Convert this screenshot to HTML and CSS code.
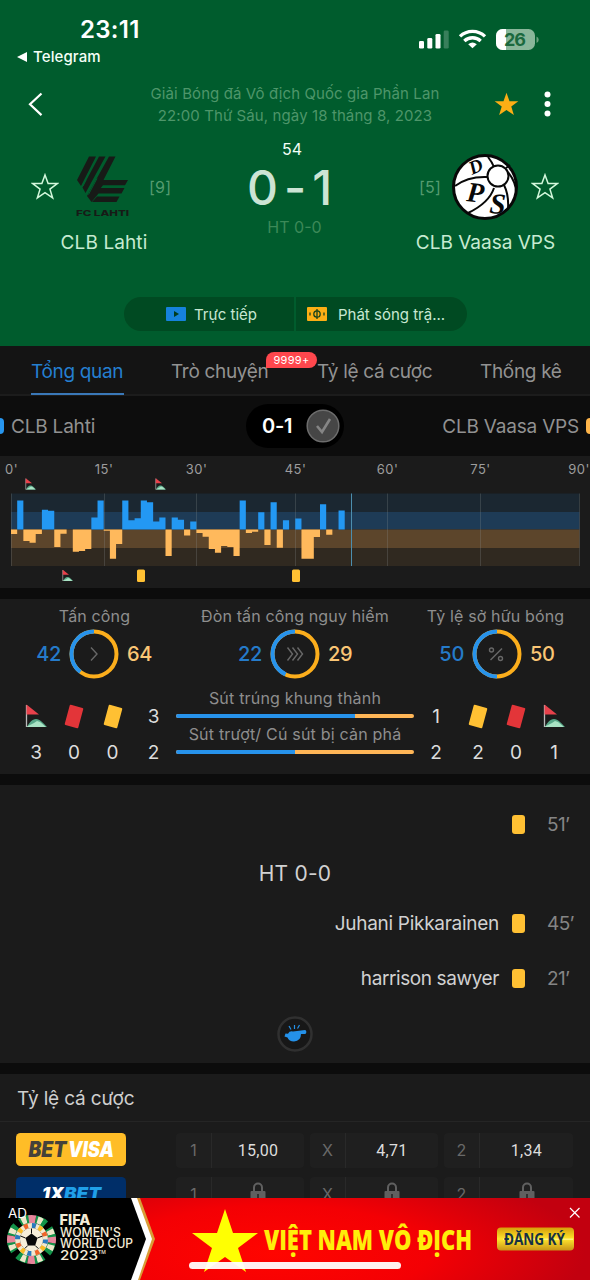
FILE: index.html
```html
<!DOCTYPE html>
<html lang="vi">
<head>
<meta charset="utf-8">
<title>CLB Lahti - CLB Vaasa VPS</title>
<link rel="stylesheet" href="styles.css">
</head>
<body>
<svg class="defs" width="0" height="0">
  <symbol id="star" viewBox="0 0 26 26"><path d="M13 1.800l2.900 8h8.500l-6.800 5.200 2.500 8.200L13 18.300l-7.100 4.900L8.400 15 1.600 9.800h8.500z"/></symbol>
  <symbol id="corner" viewBox="0 0 22 24"><path d="M2 23c2-4 5-8 9-8s7 4 11 8z" fill="#58a889"/><path d="M1 23l8-4 3-2 3 1 6 5z" fill="#a9e3c4"/><path d="M1.500 1v22" stroke="#bbb" stroke-width="1.300"/><path d="M1.500.5L14 10.500H1.500z" fill="#e8414b"/></symbol>
  <symbol id="lock" viewBox="0 0 16 20"><path d="M4 9V5.500a4 4 0 018 0V9" fill="none" stroke="#606060" stroke-width="2"/><path d="M1.500 9h13a1 1 0 011 1v9H.5v-9a1 1 0 011-1z" fill="#606060"/><path d="M8 12v4" stroke="#222" stroke-width="1.500"/></symbol>
</svg>
<main class="screen">
  <header class="hero">
    <div class="status">
      <div class="status-left">
        <div class="clock">23:11</div>
        <div class="back-app"><span class="back-arrow"></span>Telegram</div>
      </div>
      <svg class="status-icons" width="120" height="24" viewBox="0 0 120 24">
        <g fill="#fff"><rect x="0" y="13" width="5" height="7.500" rx="1.300"/><rect x="8.300" y="10" width="5" height="10.500" rx="1.300"/><rect x="16.500" y="6" width="5" height="14.500" rx="1.300"/><rect x="24.700" y="2.500" width="5" height="18" rx="1.300" opacity=".22"/></g>
        <g fill="none" stroke="#fff" stroke-width="3.300"><path d="M41 8.400a18 18 0 0125 0"/><path d="M45.300 13a12 12 0 0116.400 0"/></g><path d="M49.200 16.300q4.300-3.700 8.600 0l-4.300 4z" fill="#fff"/>
        <rect x="77" y="1" width="39" height="21" rx="6.500" fill="#89b69a"/><path d="M83.500 1H87v21h-3.500a6.500 6.500 0 01-6.500-6.500v-8A6.500 6.500 0 0183.500 1z" fill="#fff"/><path d="M117.500 8.500q2.200 1 2.200 3.300t-2.200 3.300z" fill="#6ba17e"/>
        <text x="85" y="18" class="battery" textLength="22">26</text>
      </svg>
    </div>
    <div class="topbar">
      <svg width="20" height="28" viewBox="0 0 20 28"><path d="M14.500 2.500L3 13.300l11.500 10.800" fill="none" stroke="#fff" stroke-width="2.200"/></svg>
      <div class="league"><p>Giải Bóng đá Vô địch Quốc gia Phần Lan</p><p>22:00 Thứ Sáu, ngày 18 tháng 8, 2023</p></div>
      <svg class="fav" width="27" height="27"><use href="#star" fill="#fcae15"/></svg>
      <svg class="dots" width="8" height="28" fill="#fff"><circle cx="4.500" cy="3.500" r="3"/><circle cx="4.500" cy="13" r="3"/><circle cx="4.500" cy="22.500" r="3"/></svg>
    </div>
    <div class="match">
      <div class="team home">
        <div class="team-row">
          <svg class="outline" width="28" height="28"><use href="#star"/></svg>
          <svg width="56" height="64" viewBox="0 0 56 64"><g fill="#171a17"><path d="M13 1.500h7L5 31l-4-6zM23 1.500h6.500L9.500 38l-3-5.500zM33 1.500h6.500L27.500 25H52l-3 5.200H27L24.800 33H48.500L45.500 38.500H22.500L15.500 47 11 41z"/><path d="M21 41.500h22.500l-3 5.500H16z"/></g><path d="M21 23.500L12.500 39.500M10 25l-3 6" stroke="#005c2d" stroke-width="1"/><text x="0" y="60.500" class="lahti" textLength="53" lengthAdjust="spacingAndGlyphs">FC LAHTI</text></svg>
          <span class="rank">[9]</span>
        </div>
        <div class="team-name">CLB Lahti</div>
      </div>
      <div class="score"><div class="minute">54</div><div class="result">0<span class="dash">-</span>1</div><div class="half">HT 0-0</div></div>
      <div class="team away">
        <div class="team-row">
          <span class="rank">[5]</span>
          <svg width="66" height="66" viewBox="0 0 66 66"><circle cx="33" cy="33" r="31.500" fill="#fff" stroke="#080808" stroke-width="3"/><g fill="none" stroke="#080808" stroke-width="2"><path d="M3 32Q16 22 36 23M36 3q4 5 6 10M42 34Q37 49 16 59M52 31q5 10 4 24M56 18q8 10 8 20M54 14l4-3"/><circle cx="46" cy="22" r="10.500" fill="#fff"/></g><g class="crest"><text transform="translate(20 21) rotate(-24)" font-size="19">D</text><text transform="translate(14 47) rotate(6)" font-size="28">P</text><text transform="translate(37 59) rotate(4)" font-size="29">S</text></g></svg>
          <svg class="outline" width="28" height="28"><use href="#star"/></svg>
        </div>
        <div class="team-name">CLB Vaasa VPS</div>
      </div>
    </div>
    <div class="watch">
      <div class="watch-btn live"><svg width="20" height="14"><rect width="20" height="14" rx="1" fill="#1682dc"/><path d="M8 4l5 3-5 3z" fill="#003c20"/></svg><span>Trực tiếp</span></div>
      <div class="watch-btn anim"><svg width="20" height="14"><rect width="20" height="14" rx="1" fill="#fcae15"/><g fill="none" stroke="#17431c" stroke-width="1.300"><circle cx="10" cy="7" r="3.200"/><path d="M10 2v10M3 5.500v3M17 5.500v3"/></g></svg><span>Phát sóng trậ...</span></div>
    </div>
  </header>

  <nav class="tabs">
    <span class="tab active">Tổng quan</span><span class="tab chat">Trò chuyện<b class="badge">9999+</b></span><span class="tab odds-tab">Tỷ lệ cá cược</span><span class="tab">Thống kê</span>
  </nav>
  <section class="versus">
    <span class="chip blue"></span><span class="v-name">CLB Lahti</span>
    <div class="pill"><b>0-1</b><svg width="34" height="34"><circle cx="17" cy="17" r="15.800" fill="#464646" stroke="#6d6d6d" stroke-width="1.500"/><path d="M11 17l5 6 8-13" fill="none" stroke="#858585" stroke-width="2.600"/></svg></div>
    <span class="v-name right">CLB Vaasa VPS</span><span class="chip orange"></span>
  </section>

  <section class="chart">
    <svg width="590" height="132" viewBox="0 0 590 132">
      <g class="axis"><text x="11.500" y="17.500">0'</text><text x="104" y="17.500">15'</text><text x="196.500" y="17.500">30'</text><text x="295.500" y="17.500">45'</text><text x="387.500" y="17.500">60'</text><text x="480.500" y="17.500">75'</text><text x="579" y="17.500">90'</text></g>
      <rect x="11" y="37.500" width="568.500" height="18.500" fill="#1b2731"/><rect x="11" y="56" width="568.500" height="17.500" fill="#1e3b56"/><rect x="11" y="73.500" width="568.500" height="18.500" fill="#5c452b"/><rect x="11" y="92" width="568.500" height="18" fill="#302920"/>
      <path d="M11.500 37.500V110M104.500 37.500V110M196.500 37.500V110M295.500 37.500V110M387.500 37.500V110M480.500 37.500V110M579.500 37.500V110" stroke="#8a9295" stroke-opacity=".25"/>
      <g transform="translate(11 73.500) scale(6.180 1)"><path fill="#2398f3" d="M1 0v-29h1V0zM5 0v-19.700h1v1h1V0zM13 0v-12h1v-17h1V0zM18 0v-29h1v19.700h1v-2h1V-29h1v1.700h1V-8h1v-4h1V0zM26 0v-12h1v2.300h1V0zM29 0v-8h1v8zM37 0v-29h1V0zM40 0v-17.300h1V0zM42 0v-27.300h1V0zM44 0v-9.300h1V0zM46 0v-11h1V0zM50 0v-25.300h1V0zM53 0v-19h1V0z"/><path fill="#ffb95c" d="M0 0v4.500h1V0zM2 0v11.500h1v1.800h1V4.500h1V0zM7 0v17.500h1V4.200h1V0zM10 0v22.200h1v-.7h1v-2h1V0zM15 0v1.200h1v28h1V14.500h1V0zM25 0v26.500h1V0zM28 0v6h1V0zM30 0v3.500h1v3.700h1v12.300h1v3.700h1v-6.700h1v1h1v9h1V0zM38 0v3.500h1V2.200h1V0zM41 0v15.500h1V0zM43 0v18.200h1V0zM47 0v29.200h2V7.500h1V0zM51 0v5.200h1V0z"/></g>
      <path d="M351.500 37.500V110" stroke="#4c8eae"/>
      <use href="#corner" x="24.500" y="22" width="12" height="12"/><use href="#corner" x="154.500" y="22" width="12" height="12"/><use href="#corner" x="61.500" y="113.500" width="12" height="12"/>
      <g fill="#ffc033"><rect x="137" y="113.500" width="8" height="12.500" rx="1.500"/><rect x="292" y="113.500" width="8" height="12.500" rx="1.500"/></g>
    </svg>
  </section>

  <section class="stats">
    <div class="rings">
      <div class="ring-stat"><h3>Tấn công</h3><div class="ring-row"><b class="blue-t">42</b><svg width="50" height="50" viewBox="0 0 50 50"><circle class="ring away-ring" cx="25" cy="25" r="22.500"/><circle class="ring home-ring" cx="25" cy="25" r="22.500" pathLength="100" stroke-dasharray="39.600 100" transform="matrix(0 -1 -1 0 50 50)"/><path class="glyph" d="M22 18.500l6 6.500-6 6.500"/></svg><b class="gold-t">64</b></div></div>
      <div class="ring-stat"><h3>Đòn tấn công nguy hiểm</h3><div class="ring-row"><b class="blue-t">22</b><svg width="50" height="50" viewBox="0 0 50 50"><circle class="ring away-ring" cx="25" cy="25" r="22.500"/><circle class="ring home-ring" cx="25" cy="25" r="22.500" pathLength="100" stroke-dasharray="43.100 100" transform="matrix(0 -1 -1 0 50 50)"/><path class="glyph" d="M17.500 18.500l5 6.500-5 6.500M22.500 18.500l5 6.500-5 6.500M27.500 18.500l5 6.500-5 6.500"/></svg><b class="gold-t">29</b></div></div>
      <div class="ring-stat"><h3>Tỷ lệ sở hữu bóng</h3><div class="ring-row"><b class="blue-t">50</b><svg width="50" height="50" viewBox="0 0 50 50"><circle class="ring away-ring" cx="25" cy="25" r="22.500"/><circle class="ring home-ring" cx="25" cy="25" r="22.500" pathLength="100" stroke-dasharray="50 100" transform="matrix(0 -1 -1 0 50 50)"/><path class="glyph" d="M30 19.500L18.500 31"/><circle class="glyph" cx="19.500" cy="21" r="2"/><circle class="glyph" cx="28.500" cy="29.500" r="2"/></svg><b class="gold-t">50</b></div></div>
    </div>
    <div class="counts">
      <div class="cards home-cards"><svg width="22" height="24"><use href="#corner"/></svg><i class="card red"></i><i class="card yellow"></i><span>3</span><span>3</span><span>0</span><span>0</span><span>2</span></div>
      <div class="bars"><h3>Sút trúng khung thành</h3><div class="bar"><i style="width:75%"></i></div><h3>Sút trượt/ Cú sút bị cản phá</h3><div class="bar"><i style="width:50%"></i></div></div>
      <div class="cards away-cards"><span>1</span><i class="card yellow"></i><i class="card red"></i><svg width="22" height="24"><use href="#corner"/></svg><span>2</span><span>2</span><span>0</span><span>1</span></div>
    </div>
  </section>

  <section class="events">
    <div class="event first"><i class="mini"></i><time>51’</time></div>
    <div class="ht">HT 0-0</div>
    <div class="event juhani"><span>Juhani Pikkarainen</span><i class="mini"></i><time>45’</time></div>
    <div class="event harrison"><span>harrison sawyer</span><i class="mini"></i><time>21’</time></div>
    <svg class="whistle" width="36" height="36" viewBox="0 0 36 36"><circle cx="18" cy="18" r="16.500" fill="#171717" stroke="#303030" stroke-width="2.500"/><path d="M16 15.500l12-1.500c1.800 0 1.800 4 0 4h-4q0 7-7 7.500-5 0-6.500-4l-3-1 1-3 2.500.2q1.500-3 5-2.200z" fill="#2491e9"/><path d="M14 13.500l-2-3.500M17.500 13V9M20.500 12.500l2-3.500" stroke="#2491e9" stroke-width="1.200"/></svg>
  </section>

  <section class="odds">
    <h2>Tỷ lệ cá cược</h2>
    <div class="odds-row">
      <svg class="brand" width="110" height="33"><rect width="110" height="33" rx="4.500" fill="#ffbd27"/><text class="brand-text" x="12.500" y="24" fill="#45413a" textLength="38" lengthAdjust="spacingAndGlyphs">BET</text><text class="brand-text" x="52" y="24" fill="#fff" textLength="46" lengthAdjust="spacingAndGlyphs">VISA</text></svg>
      <div class="odd"><span>1</span><b>15,00</b></div><div class="odd"><span>X</span><b>4,71</b></div><div class="odd"><span>2</span><b>1,34</b></div>
    </div>
    <div class="odds-row">
      <svg class="brand" width="110" height="33"><rect width="110" height="33" rx="4.500" fill="#002e68"/><text class="brand-text small" x="26" y="23" fill="#fff" textLength="22" lengthAdjust="spacingAndGlyphs">1X</text><text class="brand-text small" x="48" y="23" fill="#20a0e8" textLength="37" lengthAdjust="spacingAndGlyphs">BET</text></svg>
      <div class="odd"><span>1</span><b><svg width="16" height="20"><use href="#lock"/></svg></b></div><div class="odd"><span>X</span><b><svg width="16" height="20"><use href="#lock"/></svg></b></div><div class="odd"><span>2</span><b><svg width="16" height="20"><use href="#lock"/></svg></b></div>
    </div>
  </section>

  <footer class="ad">
    <svg width="590" height="82" viewBox="0 0 590 82">
      <defs><radialGradient id="red" gradientUnits="userSpaceOnUse" cx="0" cy="0" r="1" gradientTransform="translate(275 55) scale(310 95)"><stop offset="0" stop-color="#ff0500"/><stop offset=".5" stop-color="#f40004"/><stop offset="1" stop-color="#c2000f"/></radialGradient><linearGradient id="gold" x2="0" y2="1"><stop offset="0" stop-color="#d69d09"/><stop offset=".5" stop-color="#ffe52d"/><stop offset="1" stop-color="#c89416"/></linearGradient></defs>
      <rect width="590" height="82" fill="url(#red)"/>
      <path d="M0 0h140l15 41-15 41H0z" fill="#d99c36"/><path d="M0 0h137l15 41-14 41H0z" fill="#fff"/><path d="M0 0h131l15 41-15 41H0z" fill="#000"/>
      <g transform="translate(31.500 41.500)" fill="none">
        <circle r="20.500" stroke="#129349" stroke-width="8" stroke-dasharray="9 7.100" stroke-dashoffset="-3.500"/><circle r="20.500" stroke="#eee5c9" stroke-width="7" stroke-dasharray="5 11.100" stroke-dashoffset="-5.500"/><circle r="20.500" stroke="#129349" stroke-width="8" stroke-dasharray="4 12.100" stroke-dashoffset="-10.500"/><circle r="20.500" stroke="#e7859b" stroke-width="8" stroke-dasharray="7 25.200" stroke-dashoffset="3.500"/>
        <circle r="14" stroke="#f2e8ce" stroke-width="5"/><circle r="14" stroke="#2878bd" stroke-width="5" stroke-dasharray="4 17.990"/><circle r="14" stroke="#f8bb25" stroke-width="5" stroke-dasharray="4 17.990" stroke-dashoffset="-7"/><circle r="14" stroke="#ef6528" stroke-width="5" stroke-dasharray="4 17.990" stroke-dashoffset="-14"/>
        <circle r="11.500" fill="#f7efda"/><path d="M0-6l6 4.500L3.700 6h-7.400L-6-1.500z" fill="#080808"/><path d="M0-6v-5M6-1.500l5-2M3.700 6l3 3M-3.700 6l-3 3M-6-1.500l-5-2" stroke="#080808" stroke-width="1"/>
      </g>
      <text x="8" y="20" fill="#fff" font-size="13.500" textLength="19">AD</text>
      <g fill="#f4ecd7" class="fifa"><text x="59.500" y="27" class="fifa-bold" textLength="31" lengthAdjust="spacingAndGlyphs">FIFA</text><text x="60" y="38.500" textLength="61" lengthAdjust="spacingAndGlyphs">WOMEN'S</text><text x="60" y="50" textLength="73" lengthAdjust="spacingAndGlyphs">WORLD CUP</text><text x="60" y="61.500" textLength="38" lengthAdjust="spacingAndGlyphs">2023</text><text x="98" y="56" class="tm">TM</text></g>
      <path d="M225 11l8 24h25l-20 15 8 24-21-15-21 15 8-24-20-15h25z" fill="#ffff02"/>
      <text class="headline" x="264" y="52" textLength="208" lengthAdjust="spacingAndGlyphs">VIỆT NAM VÔ ĐỊCH</text>
      <rect x="497" y="29.500" width="77" height="23" rx="4" fill="url(#gold)"/><rect x="503" y="40.500" width="70" height="1.500" fill="#fff47b"/><text class="register" x="504" y="47" textLength="61" lengthAdjust="spacingAndGlyphs">ĐĂNG KÝ</text>
      <path d="M570 10l9.500 9.500M579.500 10L570 19.500" stroke="#fff" stroke-width="1.200"/>
      <rect x="189" y="64" width="212" height="7" rx="3.500" fill="#fff" fill-opacity=".94"/>
    </svg>
  </footer>
</main>
</body>
</html>
```
FILE: styles.css
```css
* { box-sizing: border-box; }
body { margin: 0; background: #0c0c0c; font-family: Inter, "Noto Sans", sans-serif; color: #ddd; }
h2, h3, p { margin: 0; font-weight: 400; }
b { font-weight: 400; }
svg { display: block; flex-shrink: 0; }
.defs { position: absolute; }
.screen { width: 590px; height: 1280px; overflow: hidden; display: flex; flex-direction: column; }
.hero { height: 346px; background: #005c2d; flex-shrink: 0; }
.status { display: flex; justify-content: space-between; height: 80px; padding: 16px 51px 0 17px; }
.status-left { width: 160px; }
.clock { margin-left: 63px; font-size: 24px; line-height: 28px; font-weight: 600; color: #fff; letter-spacing: .3px; }
.back-app { display: flex; align-items: center; gap: 6px; margin-top: 3px; font-size: 15px; line-height: 20px; font-weight: 500; color: #f5fff7; letter-spacing: .1px; }
.back-arrow { border: 5px solid transparent; border-right: 10px solid #fff; border-left: 0; }
.status-icons { margin-top: 12px; }
.battery { font-size: 18px; font-weight: 700; fill: #1b693e; }
.topbar { display: grid; grid-template-columns: 20px 446px 27px 27px; align-items: center; padding: 2px 0 0 27px; height: 48px; }
.league { padding-left: 56px; text-align: center; padding-right: 6px; font-size: 15px; line-height: 22px; color: #4e966a; white-space: nowrap; letter-spacing: .1px; }
.fav { margin-bottom: 2px; }
.dots { margin-left: 23px; }
.match { display: grid; grid-template-columns: 208px 168px 214px; height: 148px; padding-top: 10px; }
.team-row { display: flex; align-items: center; height: 74px; padding-top: 4px; margin-top: 10px; }
.home .team-row { padding-left: 31px; gap: 17px; }
.away .team-row { padding-left: 43px; gap: 11px; }
.away .outline { margin-left: 2px; }
.outline { fill: none; stroke: #d3f8dc; stroke-width: 1.4px; }
.rank { font-size: 16px; letter-spacing: .2px; color: #559b70; }
.team-name { font-size: 19px; line-height: 24px; margin-top: 9px; color: #c6ebd2; text-align: center; letter-spacing: .1px; }
.away .team-name { padding-left: 5px; letter-spacing: 0; }
.lahti { font-size: 8px; font-weight: 800; fill: #171a17; }
.crest { font-family: "Liberation Serif", serif; font-weight: bold; font-style: italic; fill: #080808; }
.score { text-align: center; }
.minute { color: #f3fff7; font-size: 16px; line-height: 22px; }
.result { display: flex; justify-content: center; font-size: 48px; line-height: 56px; font-weight: 500; color: #cce4d4; padding-right: 5px; }
.dash { padding: 0 6px; }
.half { font-size: 16px; line-height: 22px; color: #3c8958; padding-left: 5px; }
.watch { display: flex; gap: 2px; margin: 21px 0 0 124px; width: 343px; height: 34px; }
.watch-btn { display: flex; align-items: center; background: #004a22; color: #c8e8d2; font-size: 15px; white-space: nowrap; }
.live { width: 170px; padding-left: 42px; border-radius: 17px 0 0 17px; gap: 8px; }
.anim { width: 171px; padding-left: 11px; border-radius: 0 17px 17px 0; gap: 11px; }
.tabs { display: flex; height: 50px; padding-left: 31px; background: #141414; border-bottom: 2px solid #1c1c1c; flex-shrink: 0; color: #929292; font-size: 19px; line-height: 51px; white-space: nowrap; letter-spacing: -.32px; }
.tab { height: 49px; }
.active { color: #257fd0; border-bottom: 2px solid #3a78b8; margin-right: 47px; width: 93px; }
.chat { position: relative; width: 99px; margin-right: 47px; }
.odds-tab { width: 116px; margin-right: 47px; }
.badge { position: absolute; left: 95px; top: 6px; width: 51px; height: 16px; border-radius: 8px 8px 8px 0; background: #ff474d; color: #fff; font-size: 11px; line-height: 16px; text-align: center; letter-spacing: .3px; }
.versus { display: grid; grid-template-columns: 4px 242px 98px 235px 11px; align-items: center; height: 60px; background: #0d0d0d; flex-shrink: 0; }
.chip { height: 16px; }
.blue { background: #2796ef; border-radius: 0 4px 4px 0; }
.orange { background: #ffb54a; border-radius: 4px 0 0 4px; margin-left: 7px; }
.v-name { color: #919191; font-size: 19px; padding-left: 7px; letter-spacing: -.2px; }
.right { text-align: right; padding: 0; }
.pill { display: flex; align-items: center; justify-content: space-between; height: 44px; border-radius: 22px; padding: 0 4px 0 16px; background: #000; color: #fff; font-size: 20px; }
.pill b { font-weight: 600; letter-spacing: -.3px; }
.chart { height: 132px; background: #1b1b1b; flex-shrink: 0; }
.axis { font-size: 13px; fill: #9d9d9d; text-anchor: middle; letter-spacing: .5px; }
.stats { margin-top: 11px; height: 175px; background: #1b1b1b; flex-shrink: 0; padding-top: 6px; }
.rings { display: grid; grid-template-columns: 189px 212px 189px; }
.stats h3 { text-align: center; color: #8e8e8e; font-size: 16px; line-height: 22px; white-space: nowrap; letter-spacing: .15px; }
.ring-row { display: flex; justify-content: center; align-items: center; gap: 8px; font-size: 20px; margin-top: 2px; letter-spacing: -.3px; }
.ring-row b { font-weight: 500; width: 26px; }
.ring-row .blue-t { text-align: right; }
.ring-row .gold-t { text-align: left; }
.ring-stat:first-child .ring-row { padding-right: 1px; }
.ring-stat:last-child .ring-row { padding-left: 3px; }
.blue-t { color: #257bca; }
.gold-t { color: #fac675; }
.ring { fill: none; stroke-width: 4; }
.away-ring { stroke: #fcae1c; }
.home-ring { stroke: #2793ec; }
.glyph { fill: none; stroke: #686868; stroke-width: 1.4; }
.counts { display: grid; grid-template-columns: 176px 238px 176px; margin-top: 8px; }
.cards { display: grid; grid-template-rows: 36px 36px; justify-items: center; align-items: center; align-content: start; margin-top: 11px; font-size: 19px; color: #ddd; }
.home-cards { grid-template-columns: 38px 38px 39px 43px; padding-left: 17px; }
.away-cards { grid-template-columns: 44px 40px 36px 40px; }
.card { width: 14px; height: 21px; transform: rotate(15deg); border-radius: 1px; }
.red { background: #e33539; }
.yellow { background: #ffc033; }
.bars h3 { height: 22px; margin-bottom: 5px; letter-spacing: .2px; }
.bar { height: 4px; margin-bottom: 5px; border-radius: 2px; overflow: hidden; background: #ffb657; }
.bar i { display: block; height: 4px; background: #2793ec; }
.events { margin-top: 11px; height: 278px; background: #1b1b1b; flex-shrink: 0; padding-top: 14px; }
.event { display: flex; align-items: center; justify-content: flex-end; height: 50px; padding-right: 17px; font-size: 19px; color: #d1d1d1; letter-spacing: -.28px; }
.harrison span { letter-spacing: -.4px; }
.mini { width: 13px; height: 19px; background: #ffc033; border-radius: 3px; margin: 0 22px 0 13px; }
.event time { width: 26px; text-align: left; color: #858585; white-space: nowrap; letter-spacing: -.6px; }
.ht { height: 49px; line-height: 50px; text-align: center; font-size: 21px; color: #d1d1d1; letter-spacing: .2px; }
.harrison { height: 60px; }
.whistle { margin: 8px auto 0; }
.odds { margin-top: 11px; height: 124px; overflow: hidden; background: #1b1b1b; flex-shrink: 0; }
.odds h2 { height: 48px; line-height: 49px; padding-left: 17px; font-size: 19px; color: #cfcfcf; border-bottom: 1px solid #252525; margin-bottom: 11px; letter-spacing: -.15px; }
.odds-row { display: grid; grid-template-columns: 154px 128px 128px 129px; column-gap: 6px; height: 33px; padding-left: 16px; margin-bottom: 11px; }
.odd { display: grid; grid-template-columns: 36px 1fr; line-height: 34px; text-align: center; background: #1f1f1f; border-radius: 4px; }
.odd span { color: #696969; border-right: 1px solid #292929; font-size: 16px; }
.odd b { color: #ddd; font-size: 16px; font-family: Roboto, sans-serif; display: flex; justify-content: center; line-height: 35px; letter-spacing: .3px; }
.odd svg { margin-top: 5px; }
.brand-text { font-size: 21px; font-weight: 900; font-style: italic; }
.small { font-size: 18px; }
.ad { height: 82px; flex-shrink: 0; }
.fifa { font-size: 12.5px; font-weight: 500; }
.fifa-bold { font-size: 14px; font-weight: 800; }
.tm { font-size: 5px; }
.headline { font-family: "Open Sans", sans-serif; font-size: 28px; font-weight: 800; fill: #ffee0a; }
.register { font-family: "Open Sans", sans-serif; font-size: 16px; font-weight: 700; fill: #163144; }
```
